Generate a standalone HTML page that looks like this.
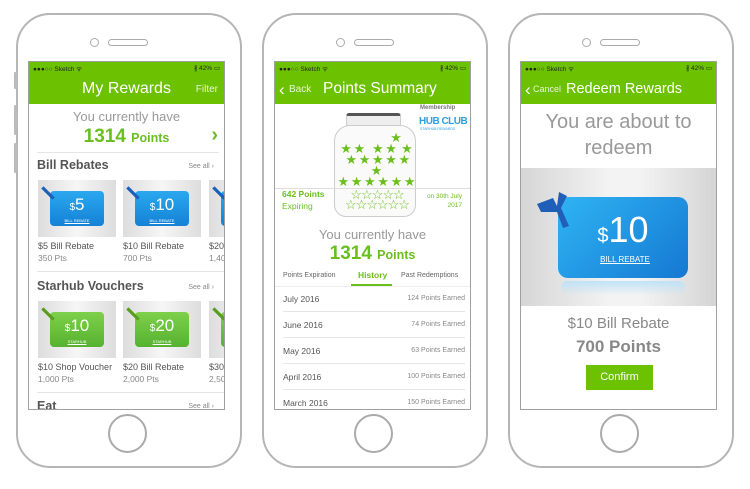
<!DOCTYPE html>
<html><head><meta charset="utf-8"><style>
*{margin:0;padding:0;box-sizing:border-box}
body{width:750px;height:489px;background:#fff;position:relative;overflow:hidden;font-family:"Liberation Sans",sans-serif;color:#666}
.a{position:absolute}
.phone{position:absolute;top:13px;width:226px;height:455px;border:2px solid #b5b5b5;border-radius:34px;background:#fff}
.btn{position:absolute;width:3px;background:#bbb;border-radius:1px}
.home{position:absolute;width:39px;height:39px;border:2px solid #aaa;border-radius:50%}
.cam{position:absolute;width:9px;height:9px;border:1.5px solid #aaa;border-radius:50%}
.spk{position:absolute;width:40px;height:7px;border:1.5px solid #aaa;border-radius:4px}
.screen{position:absolute;top:61px;width:197px;height:349px;border:1.5px solid #a0a0a0;overflow:hidden;background:#fff}
.sb{position:absolute;left:0;top:0;width:100%;height:42px;background:#6cc100;color:#fff}
.sb .st{position:absolute;top:2px;left:4px;font-size:6.5px;color:#222}
.sb .sr{position:absolute;top:2px;right:4px;font-size:6.5px;color:#222}
.ttl{position:absolute;top:18px;width:100%;text-align:center;font-size:16px;color:#fff}
.g{color:#6abf1e}
.card{position:absolute;width:78px;height:57px;background:linear-gradient(90deg,#ddd,#f6f6f6 50%,#ddd)}
.card .c{position:absolute;left:12px;top:11px;width:54px;height:35px;border-radius:4px;color:#fff;text-align:center}
.blue .c{background:linear-gradient(#2aa8ee,#1581d6)}
.green .c{background:linear-gradient(#7fd04a,#55b230)}
.card .v{font-size:17px;line-height:20px;margin-top:4px}
.card .v small{font-size:10px}
.card .s{font-size:4px;text-decoration:underline}
.card .r{position:absolute;left:2px;top:5px;width:16px;height:16px;transform:rotate(45deg)}
.blue .r{background:#1d5fb8;clip-path:polygon(0 40%,100% 40%,100% 60%,0 60%)}
.green .r{background:#5a9c20;clip-path:polygon(0 40%,100% 40%,100% 60%,0 60%)}
.lbl{position:absolute;font-size:9px;color:#555}
.lbl2{position:absolute;font-size:8.5px;color:#888}
.hd{position:absolute;font-size:12.5px;font-weight:bold;color:#555}
.sa{position:absolute;font-size:7px;color:#888}
.hr{position:absolute;height:1px;background:#e6e6e6}
.row{position:absolute;left:8px;width:182px;font-size:8.5px;color:#555}
.row span{position:absolute;right:0;font-size:7px;color:#888;top:1px}
</style></head><body>

<!-- PHONE 1 -->
<div class="phone" style="left:16px"></div>
<div class="btn" style="left:14px;top:72px;height:17px"></div>
<div class="btn" style="left:14px;top:105px;height:30px"></div>
<div class="btn" style="left:14px;top:143px;height:30px"></div>
<div class="cam" style="left:90px;top:38px"></div>
<div class="spk" style="left:108px;top:39px"></div>
<div class="home" style="left:108px;top:414px"></div>
<div class="screen" style="left:28px">
 <div class="sb"><div class="st">●●●○○ Sketch ᯤ</div><div class="sr">∦ 42% ▭</div>
 <div class="ttl">My Rewards</div><div class="a" style="right:6px;top:22px;font-size:10px;color:#e8f5d8">Filter</div></div>
 <div class="a" style="top:47px;width:100%;text-align:center;font-size:13px;color:#999">You currently have</div>
 <div class="a g" style="top:64px;width:100%;text-align:center;font-size:19px;font-weight:bold">1314 <span style="font-size:12.5px">Points</span></div>
 <div class="a g" style="right:6px;top:62px;font-size:20px;font-weight:bold">›</div>
 <div class="hr" style="left:8px;width:182px;top:90px"></div>
 <div class="hd" style="left:8px;top:96px">Bill Rebates</div><div class="sa" style="right:10px;top:101px">See all ›</div>
 <div class="card blue" style="left:9px;top:118px"><div class="c"><div class="v"><small>$</small>5</div><div class="s">BILL REBATE</div></div><div class="r"></div></div>
 <div class="card blue" style="left:94px;top:118px"><div class="c"><div class="v"><small>$</small>10</div><div class="s">BILL REBATE</div></div><div class="r"></div></div>
 <div class="card blue" style="left:180px;top:118px"><div class="c"><div class="v"><small>$</small>20</div></div><div class="r"></div></div>
 <div class="lbl" style="left:9px;top:179px">$5 Bill Rebate</div><div class="lbl2" style="left:9px;top:191px">350 Pts</div>
 <div class="lbl" style="left:94px;top:179px">$10 Bill Rebate</div><div class="lbl2" style="left:94px;top:191px">700 Pts</div>
 <div class="lbl" style="left:180px;top:179px">$20</div><div class="lbl2" style="left:180px;top:191px">1,40</div>
 <div class="hr" style="left:8px;width:190px;top:209px"></div>
 <div class="hd" style="left:8px;top:217px">Starhub Vouchers</div><div class="sa" style="right:10px;top:222px">See all ›</div>
 <div class="card green" style="left:9px;top:239px"><div class="c"><div class="v"><small>$</small>10</div><div class="s">STARHUB</div></div><div class="r"></div></div>
 <div class="card green" style="left:94px;top:239px"><div class="c"><div class="v"><small>$</small>20</div><div class="s">STARHUB</div></div><div class="r"></div></div>
 <div class="card green" style="left:180px;top:239px"><div class="c"><div class="v"><small>$</small>30</div></div><div class="r"></div></div>
 <div class="lbl" style="left:9px;top:300px">$10 Shop Voucher</div><div class="lbl2" style="left:9px;top:312px">1,000 Pts</div>
 <div class="lbl" style="left:94px;top:300px">$20 Bill Rebate</div><div class="lbl2" style="left:94px;top:312px">2,000 Pts</div>
 <div class="lbl" style="left:180px;top:300px">$30</div><div class="lbl2" style="left:180px;top:312px">2,50</div>
 <div class="hr" style="left:8px;width:190px;top:330px"></div>
 <div class="hd" style="left:8px;top:337px">Eat</div><div class="sa" style="right:10px;top:341px">See all ›</div>
</div>

<!-- PHONE 2 -->
<div class="phone" style="left:262px"></div>
<div class="cam" style="left:336px;top:38px"></div>
<div class="spk" style="left:354px;top:39px"></div>
<div class="home" style="left:354px;top:414px"></div>
<div class="screen" style="left:274px">
 <div class="sb"><div class="st">●●●○○ Sketch ᯤ</div><div class="sr">∦ 42% ▭</div>
 <div class="a" style="left:4px;top:18px;font-size:17px;color:#fff">‹</div><div class="a" style="left:14px;top:22px;font-size:10px;color:#e8f5d8">Back</div>
 <div class="a" style="left:48px;top:18px;font-size:15.5px;color:#fff">Points Summary</div></div>
 <div class="a" style="left:145px;top:43px;font-size:6px;color:#777;font-weight:bold">Membership</div>
 <div class="a" style="left:144px;top:54px;font-size:10px;color:#2aa0e0;font-weight:bold;letter-spacing:-0.5px">HUB CLUB</div>
 <div class="a" style="left:145px;top:65px;font-size:3.5px;color:#2aa0e0">STARHUB REWARDS</div>
 <div class="a" style="left:71px;top:51px;width:55px;height:13px;background:#eee;border:1px solid #ccc;border-top:3px solid #555;border-radius:3px 3px 0 0"></div>
 <div class="a" style="left:59px;top:63px;width:82px;height:92px;border:1.5px solid #ccc;border-radius:16px 16px 12px 12px;background:#fafafa"></div>
 <div class="hr" style="left:0;width:197px;top:126px;background:#ddd"></div>
 <div class="a g" style="left:62px;top:70px;width:78px;font-size:13px;line-height:11px;letter-spacing:-1px;text-align:center">&nbsp;&nbsp;&nbsp;&nbsp;&nbsp;&nbsp;&nbsp;&nbsp;&nbsp;&nbsp;&nbsp;&nbsp;&nbsp;&nbsp;&nbsp;★<br>★ ★&nbsp;&nbsp;&nbsp;★ ★&nbsp;&nbsp;★<br>&nbsp;★ ★ ★&nbsp;★ ★ ★<br>★ ★&nbsp;★ ★ ★ ★</div>
 <div class="a g" style="left:64px;top:128px;width:76px;font-size:13px;line-height:10px;letter-spacing:-1px;text-align:center">☆☆☆☆☆<br>☆☆☆☆☆☆</div>
 <div class="a g" style="left:7px;top:127px;font-size:8.5px;font-weight:bold">642 Points</div>
 <div class="a g" style="left:7px;top:139px;font-size:8.5px">Expiring</div>
 <div class="a g" style="right:8px;top:130px;font-size:6.5px;text-align:right;line-height:9px">on 30th July<br>2017</div>
 <div class="a" style="top:165px;width:100%;text-align:center;font-size:13px;color:#999">You currently have</div>
 <div class="a g" style="top:181px;width:100%;text-align:center;font-size:19px;font-weight:bold">1314 <span style="font-size:12.5px">Points</span></div>
 <div class="a" style="left:8px;top:210px;font-size:7px;color:#666">Points Expiration</div>
 <div class="a g" style="left:83px;top:208px;font-size:8.5px;font-weight:bold">History</div>
 <div class="a" style="left:76px;top:222px;width:41px;height:1.5px;background:#6abf1e"></div>
 <div class="a" style="left:126px;top:210px;font-size:7px;color:#666">Past Redemptions</div>
 <div class="hr" style="left:0;width:197px;top:224px;background:#eee"></div>
 <div class="row" style="top:232px">July 2016<span>124 Points Earned</span></div>
 <div class="hr" style="left:8px;width:182px;top:249px"></div>
 <div class="row" style="top:258px">June 2016<span>74 Points Earned</span></div>
 <div class="hr" style="left:8px;width:182px;top:275px"></div>
 <div class="row" style="top:284px">May 2016<span>63 Points Earned</span></div>
 <div class="hr" style="left:8px;width:182px;top:301px"></div>
 <div class="row" style="top:310px">April 2016<span>100 Points Earned</span></div>
 <div class="hr" style="left:8px;width:182px;top:327px"></div>
 <div class="row" style="top:336px">March 2016<span>150 Points Earned</span></div>
</div>

<!-- PHONE 3 -->
<div class="phone" style="left:508px"></div>
<div class="cam" style="left:582px;top:38px"></div>
<div class="spk" style="left:600px;top:39px"></div>
<div class="home" style="left:600px;top:414px"></div>
<div class="screen" style="left:520px">
 <div class="sb"><div class="st">●●●○○ Sketch ᯤ</div><div class="sr">∦ 42% ▭</div>
 <div class="a" style="left:4px;top:18px;font-size:17px;color:#fff">‹</div><div class="a" style="left:12px;top:22px;font-size:9px;color:#e8f5d8">Cancel</div>
 <div class="a" style="left:45px;top:19px;font-size:14.5px;color:#fff">Redeem Rewards</div></div>
 <div class="a" style="top:47px;width:100%;text-align:center;font-size:20px;line-height:26px;color:#999">You are about to<br>redeem</div>
 <div class="a" style="left:0;top:106px;width:197px;height:138px;background:linear-gradient(90deg,#d6d6d6,#f3f3f3 45%,#f3f3f3 60%,#d4d4d4)"></div>
 <div class="a" style="left:37px;top:135px;width:130px;height:81px;border-radius:10px;background:linear-gradient(135deg,#2fb4f4,#1578d2);color:#fff;text-align:center">
  <div style="font-size:36px;line-height:38px;margin-top:14px"><span style="font-size:20px">$</span>10</div>
  <div style="font-size:8px;text-decoration:underline;margin-left:4px">BILL REBATE</div></div>
 <div class="a" style="left:40px;top:219px;width:124px;height:14px;background:linear-gradient(#bfe3f7,rgba(240,240,240,0));border-radius:6px"></div>
 <div class="a" style="left:16px;top:126px;width:40px;height:40px;background:#1f5fb8;clip-path:polygon(0 40%,40% 25%,50% 45%,55% 10%,75% 20%,60% 50%,80% 95%,65% 100%,50% 60%,10% 60%)"></div>
 <div class="a" style="top:253px;width:100%;text-align:center;font-size:15px;color:#888">$10 Bill Rebate</div>
 <div class="a" style="top:275px;width:100%;text-align:center;font-size:17px;font-weight:bold;color:#888">700 Points</div>
 <div class="a" style="left:65px;top:303px;width:67px;height:25px;background:#6cc100;color:#fff;font-size:11px;text-align:center;line-height:25px">Confirm</div>
</div>
</body></html>
